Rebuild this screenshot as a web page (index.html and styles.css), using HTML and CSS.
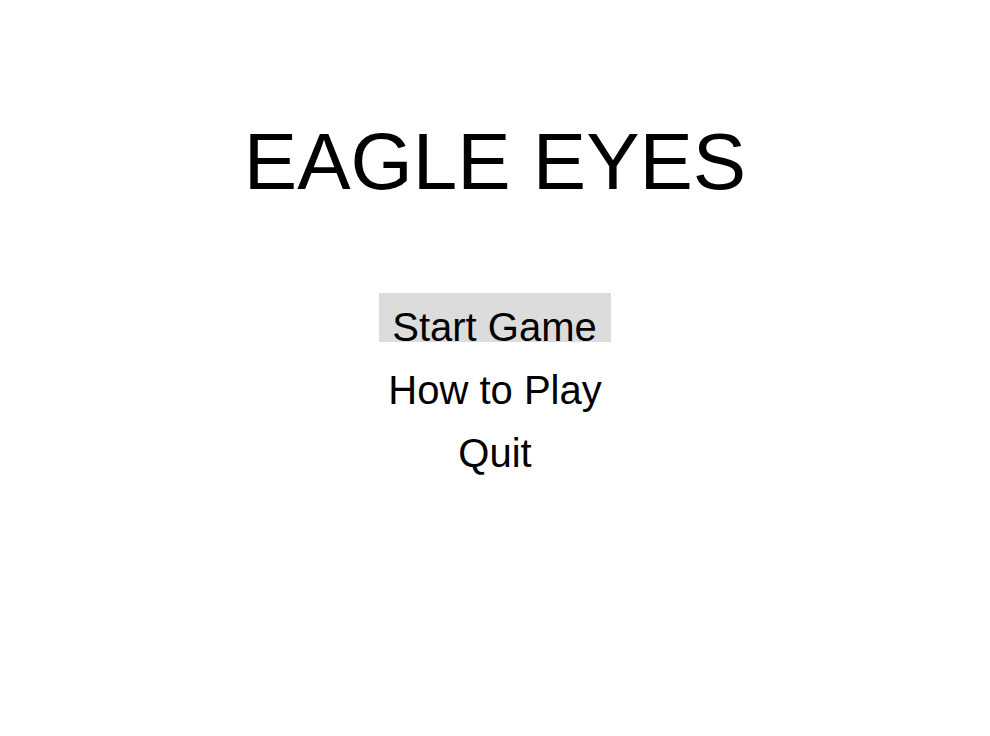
FILE: index.html
```html
<!DOCTYPE html>
<html>
<head>
<meta charset="utf-8">
<link rel="stylesheet" href="styles.css">
</head>
<body>
<main class="screen">
  <h1 class="title">EAGLE EYES</h1>
  <nav class="menu">
    <div class="item selected">Start Game</div>
    <div class="item">How to Play</div>
    <div class="item">Quit</div>
  </nav>
</main>
</body>
</html>
```
FILE: styles.css
```css
html, body {
  margin: 0;
  padding: 0;
  background: #ffffff;
}
.screen {
  width: 990px;
  height: 736px;
  display: flex;
  flex-direction: column;
  align-items: center;
  padding-top: 122px;
  box-sizing: border-box;
  font-family: "Liberation Sans", Arial, sans-serif;
  color: #000;
}
.title {
  margin: 0;
  font-size: 80px;
  line-height: 80px;
  font-weight: normal;
}
.menu {
  margin-top: 91px;
  display: flex;
  flex-direction: column;
  align-items: center;
  gap: 14px;
}
.item {
  font-size: 40px;
  line-height: 30px;
  padding: 19px 13px 0;
  height: 30px;
}
.selected {
  background: #dcdcdc;
  padding-right: 14px;
}
```
